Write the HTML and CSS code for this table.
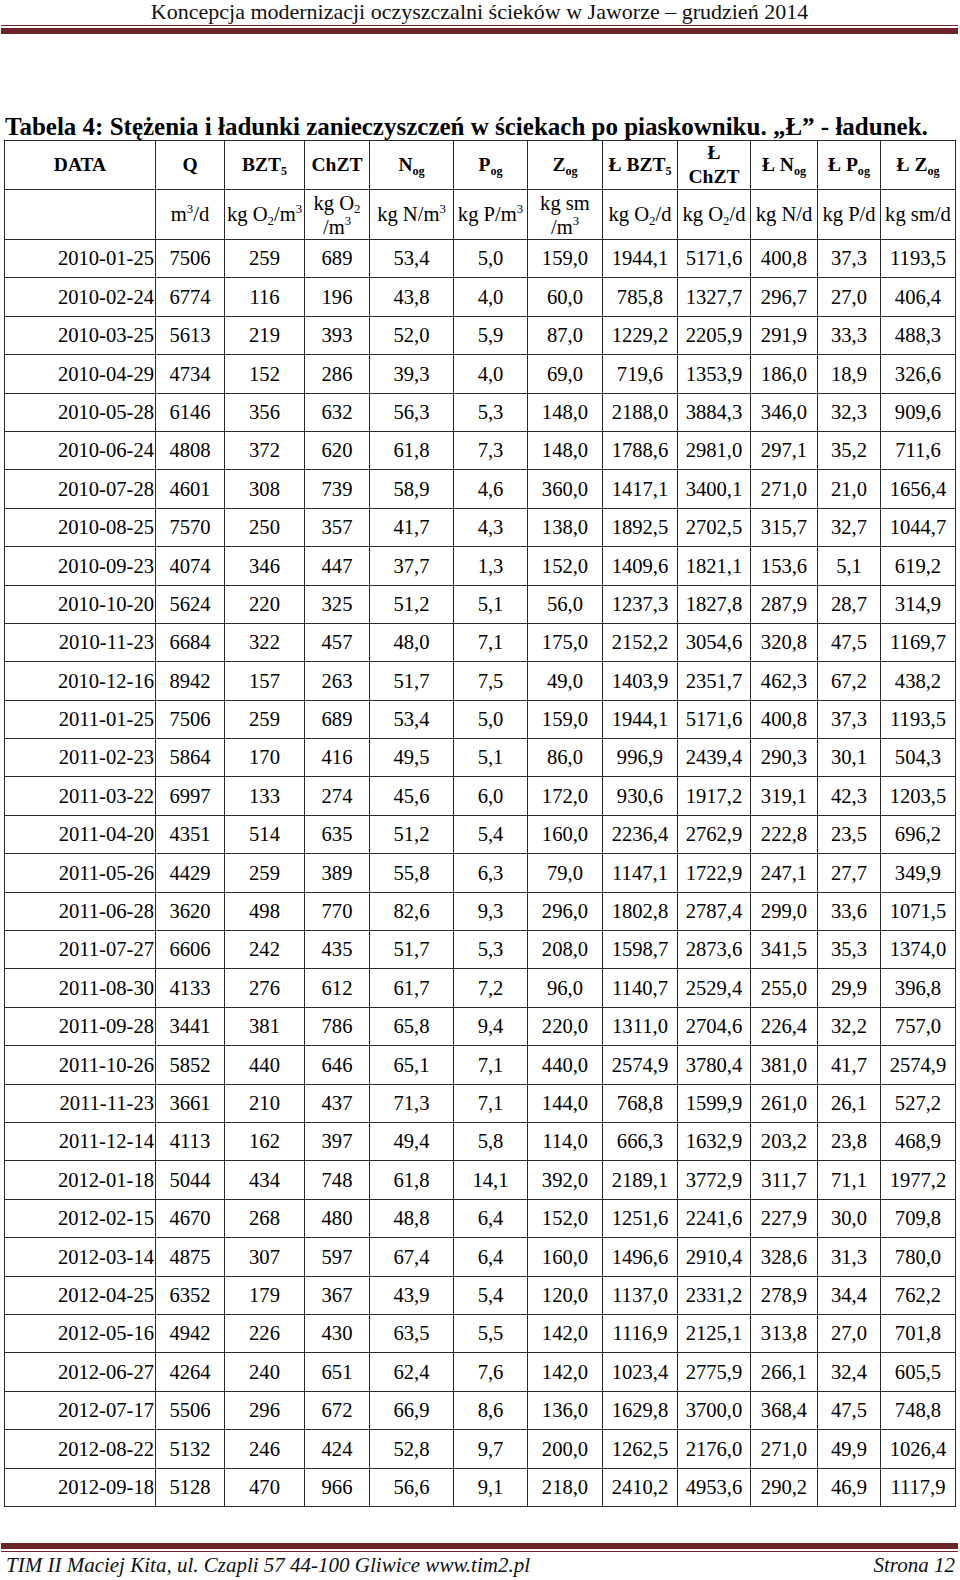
FILE: index.html
```html
<!DOCTYPE html>
<html lang="pl">
<head>
<meta charset="utf-8">
<title>Tabela 4</title>
<link rel="stylesheet" href="styles.css">
</head>
<body>
<div class="page">
  <header class="doc-header">
    <div class="doc-title">Koncepcja modernizacji oczyszczalni ścieków w Jaworze – grudzień 2014</div>
    <div class="rule-thin"></div>
    <div class="rule-thick"></div>
  </header>

  <h1 class="caption">Tabela 4: Stężenia i ładunki zanieczyszczeń w ściekach po piaskowniku. „Ł” - ładunek.</h1>

  <table class="data">
    <colgroup>
      <col class="c-date"><col class="c-q"><col class="c-bzt"><col class="c-chzt"><col class="c-n"><col class="c-p"><col class="c-z"><col class="c-lbzt"><col class="c-lchzt"><col class="c-ln"><col class="c-lp"><col class="c-lz">
    </colgroup>
    <thead>
      <tr class="h1">
        <th>DATA</th>
        <th>Q</th>
        <th>BZT<sub>5</sub></th>
        <th>ChZT</th>
        <th>N<sub>og</sub></th>
        <th>P<sub>og</sub></th>
        <th>Z<sub>og</sub></th>
        <th>Ł BZT<sub>5</sub></th>
        <th><span class="l2">Ł<br>ChZT</span></th>
        <th>Ł N<sub>og</sub></th>
        <th>Ł P<sub>og</sub></th>
        <th>Ł Z<sub>og</sub></th>
      </tr>
      <tr class="h2">
        <td></td>
        <td>m<sup>3</sup>/d</td>
        <td>kg O<sub>2</sub>/m<sup>3</sup></td>
        <td><span class="l2">kg O<sub>2</sub><br>/m<sup>3</sup></span></td>
        <td>kg N/m<sup>3</sup></td>
        <td>kg P/m<sup>3</sup></td>
        <td><span class="l2">kg sm<br>/m<sup>3</sup></span></td>
        <td>kg O<sub>2</sub>/d</td>
        <td>kg O<sub>2</sub>/d</td>
        <td>kg N/d</td>
        <td>kg P/d</td>
        <td>kg sm/d</td>
      </tr>
    </thead>
    <tbody>
<tr><td>2010-01-25</td><td>7506</td><td>259</td><td>689</td><td>53,4</td><td>5,0</td><td>159,0</td><td>1944,1</td><td>5171,6</td><td>400,8</td><td>37,3</td><td>1193,5</td></tr>
<tr><td>2010-02-24</td><td>6774</td><td>116</td><td>196</td><td>43,8</td><td>4,0</td><td>60,0</td><td>785,8</td><td>1327,7</td><td>296,7</td><td>27,0</td><td>406,4</td></tr>
<tr><td>2010-03-25</td><td>5613</td><td>219</td><td>393</td><td>52,0</td><td>5,9</td><td>87,0</td><td>1229,2</td><td>2205,9</td><td>291,9</td><td>33,3</td><td>488,3</td></tr>
<tr><td>2010-04-29</td><td>4734</td><td>152</td><td>286</td><td>39,3</td><td>4,0</td><td>69,0</td><td>719,6</td><td>1353,9</td><td>186,0</td><td>18,9</td><td>326,6</td></tr>
<tr><td>2010-05-28</td><td>6146</td><td>356</td><td>632</td><td>56,3</td><td>5,3</td><td>148,0</td><td>2188,0</td><td>3884,3</td><td>346,0</td><td>32,3</td><td>909,6</td></tr>
<tr><td>2010-06-24</td><td>4808</td><td>372</td><td>620</td><td>61,8</td><td>7,3</td><td>148,0</td><td>1788,6</td><td>2981,0</td><td>297,1</td><td>35,2</td><td>711,6</td></tr>
<tr><td>2010-07-28</td><td>4601</td><td>308</td><td>739</td><td>58,9</td><td>4,6</td><td>360,0</td><td>1417,1</td><td>3400,1</td><td>271,0</td><td>21,0</td><td>1656,4</td></tr>
<tr><td>2010-08-25</td><td>7570</td><td>250</td><td>357</td><td>41,7</td><td>4,3</td><td>138,0</td><td>1892,5</td><td>2702,5</td><td>315,7</td><td>32,7</td><td>1044,7</td></tr>
<tr><td>2010-09-23</td><td>4074</td><td>346</td><td>447</td><td>37,7</td><td>1,3</td><td>152,0</td><td>1409,6</td><td>1821,1</td><td>153,6</td><td>5,1</td><td>619,2</td></tr>
<tr><td>2010-10-20</td><td>5624</td><td>220</td><td>325</td><td>51,2</td><td>5,1</td><td>56,0</td><td>1237,3</td><td>1827,8</td><td>287,9</td><td>28,7</td><td>314,9</td></tr>
<tr><td>2010-11-23</td><td>6684</td><td>322</td><td>457</td><td>48,0</td><td>7,1</td><td>175,0</td><td>2152,2</td><td>3054,6</td><td>320,8</td><td>47,5</td><td>1169,7</td></tr>
<tr><td>2010-12-16</td><td>8942</td><td>157</td><td>263</td><td>51,7</td><td>7,5</td><td>49,0</td><td>1403,9</td><td>2351,7</td><td>462,3</td><td>67,2</td><td>438,2</td></tr>
<tr><td>2011-01-25</td><td>7506</td><td>259</td><td>689</td><td>53,4</td><td>5,0</td><td>159,0</td><td>1944,1</td><td>5171,6</td><td>400,8</td><td>37,3</td><td>1193,5</td></tr>
<tr><td>2011-02-23</td><td>5864</td><td>170</td><td>416</td><td>49,5</td><td>5,1</td><td>86,0</td><td>996,9</td><td>2439,4</td><td>290,3</td><td>30,1</td><td>504,3</td></tr>
<tr><td>2011-03-22</td><td>6997</td><td>133</td><td>274</td><td>45,6</td><td>6,0</td><td>172,0</td><td>930,6</td><td>1917,2</td><td>319,1</td><td>42,3</td><td>1203,5</td></tr>
<tr><td>2011-04-20</td><td>4351</td><td>514</td><td>635</td><td>51,2</td><td>5,4</td><td>160,0</td><td>2236,4</td><td>2762,9</td><td>222,8</td><td>23,5</td><td>696,2</td></tr>
<tr><td>2011-05-26</td><td>4429</td><td>259</td><td>389</td><td>55,8</td><td>6,3</td><td>79,0</td><td>1147,1</td><td>1722,9</td><td>247,1</td><td>27,7</td><td>349,9</td></tr>
<tr><td>2011-06-28</td><td>3620</td><td>498</td><td>770</td><td>82,6</td><td>9,3</td><td>296,0</td><td>1802,8</td><td>2787,4</td><td>299,0</td><td>33,6</td><td>1071,5</td></tr>
<tr><td>2011-07-27</td><td>6606</td><td>242</td><td>435</td><td>51,7</td><td>5,3</td><td>208,0</td><td>1598,7</td><td>2873,6</td><td>341,5</td><td>35,3</td><td>1374,0</td></tr>
<tr><td>2011-08-30</td><td>4133</td><td>276</td><td>612</td><td>61,7</td><td>7,2</td><td>96,0</td><td>1140,7</td><td>2529,4</td><td>255,0</td><td>29,9</td><td>396,8</td></tr>
<tr><td>2011-09-28</td><td>3441</td><td>381</td><td>786</td><td>65,8</td><td>9,4</td><td>220,0</td><td>1311,0</td><td>2704,6</td><td>226,4</td><td>32,2</td><td>757,0</td></tr>
<tr><td>2011-10-26</td><td>5852</td><td>440</td><td>646</td><td>65,1</td><td>7,1</td><td>440,0</td><td>2574,9</td><td>3780,4</td><td>381,0</td><td>41,7</td><td>2574,9</td></tr>
<tr><td>2011-11-23</td><td>3661</td><td>210</td><td>437</td><td>71,3</td><td>7,1</td><td>144,0</td><td>768,8</td><td>1599,9</td><td>261,0</td><td>26,1</td><td>527,2</td></tr>
<tr><td>2011-12-14</td><td>4113</td><td>162</td><td>397</td><td>49,4</td><td>5,8</td><td>114,0</td><td>666,3</td><td>1632,9</td><td>203,2</td><td>23,8</td><td>468,9</td></tr>
<tr><td>2012-01-18</td><td>5044</td><td>434</td><td>748</td><td>61,8</td><td>14,1</td><td>392,0</td><td>2189,1</td><td>3772,9</td><td>311,7</td><td>71,1</td><td>1977,2</td></tr>
<tr><td>2012-02-15</td><td>4670</td><td>268</td><td>480</td><td>48,8</td><td>6,4</td><td>152,0</td><td>1251,6</td><td>2241,6</td><td>227,9</td><td>30,0</td><td>709,8</td></tr>
<tr><td>2012-03-14</td><td>4875</td><td>307</td><td>597</td><td>67,4</td><td>6,4</td><td>160,0</td><td>1496,6</td><td>2910,4</td><td>328,6</td><td>31,3</td><td>780,0</td></tr>
<tr><td>2012-04-25</td><td>6352</td><td>179</td><td>367</td><td>43,9</td><td>5,4</td><td>120,0</td><td>1137,0</td><td>2331,2</td><td>278,9</td><td>34,4</td><td>762,2</td></tr>
<tr><td>2012-05-16</td><td>4942</td><td>226</td><td>430</td><td>63,5</td><td>5,5</td><td>142,0</td><td>1116,9</td><td>2125,1</td><td>313,8</td><td>27,0</td><td>701,8</td></tr>
<tr><td>2012-06-27</td><td>4264</td><td>240</td><td>651</td><td>62,4</td><td>7,6</td><td>142,0</td><td>1023,4</td><td>2775,9</td><td>266,1</td><td>32,4</td><td>605,5</td></tr>
<tr><td>2012-07-17</td><td>5506</td><td>296</td><td>672</td><td>66,9</td><td>8,6</td><td>136,0</td><td>1629,8</td><td>3700,0</td><td>368,4</td><td>47,5</td><td>748,8</td></tr>
<tr><td>2012-08-22</td><td>5132</td><td>246</td><td>424</td><td>52,8</td><td>9,7</td><td>200,0</td><td>1262,5</td><td>2176,0</td><td>271,0</td><td>49,9</td><td>1026,4</td></tr>
<tr><td>2012-09-18</td><td>5128</td><td>470</td><td>966</td><td>56,6</td><td>9,1</td><td>218,0</td><td>2410,2</td><td>4953,6</td><td>290,2</td><td>46,9</td><td>1117,9</td></tr>
    </tbody>
  </table>

  <footer class="doc-footer">
    <div class="rule-thick"></div>
    <div class="rule-thin"></div>
    <div class="foot-text">
      <span>TIM II Maciej Kita, ul. Czapli 57 44-100 Gliwice www.tim2.pl</span>
      <span>Strona 12</span>
    </div>
  </footer>
</div>
</body>
</html>
```

FILE: styles.css
```css
html, body {
  margin: 0;
  padding: 0;
  background: #ffffff;
}

.page {
  width: 960px;
  height: 1580px;
  overflow: hidden;
  display: flex;
  flex-direction: column;
  color: #000;
  font-family: "Liberation Serif", "Times New Roman", serif;
}

.doc-header {
  padding: 0 2px 0 1px;
}

.doc-title {
  font-family: "Liberation Serif", serif;
  font-size: 22px;
  line-height: 24px;
  text-align: center;
  color: #111;
  height: 25px;
}

.rule-thin {
  height: 1px;
  background: #6b2528;
}

.rule-thick {
  height: 6px;
  background: #6b2528;
}

.doc-header .rule-thin { margin-bottom: 2px; }

.caption {
  margin: 79px 0 0 5px;
  font-size: 25px;
  line-height: 28px;
  font-weight: bold;
  white-space: nowrap;
}

table.data {
  margin: -1px 0 0 4px;
  width: 951px;
  table-layout: fixed;
  border-collapse: collapse;
  font-size: 20.6px;
}

.c-date { width: 151px; }
.c-q { width: 69px; }
.c-bzt { width: 80px; }
.c-chzt { width: 65px; }
.c-n { width: 84px; }
.c-p { width: 74px; }
.c-z { width: 75px; }
.c-lbzt { width: 75px; }
.c-lchzt { width: 73px; }
.c-ln { width: 67px; }
.c-lp { width: 63px; }
.c-lz { width: 75px; }

table.data th,
table.data td {
  border: 1px solid #2a2a2a;
  padding: 0;
  text-align: center;
  vertical-align: middle;
  white-space: nowrap;
  line-height: 1;
}

tr.h1 { height: 48px; }
tr.h1 th {
  font-size: 19.5px;
  font-weight: bold;
}

tr.h2 { height: 50px; }

table.data .l2 {
  display: inline-block;
  line-height: 24px;
}

tbody tr { height: 38.4px; }

tbody td:first-child {
  text-align: right;
  padding-right: 1px;
}

sub, sup {
  font-size: 62%;
  line-height: 0;
  position: relative;
  vertical-align: baseline;
}
sub { top: 0.3em; }
sup { top: -0.65em; }

.doc-footer {
  margin-top: 36px;
  padding: 0 2px 0 1px;
}

.doc-footer .rule-thin { margin-top: 2px; }

.foot-text {
  display: flex;
  justify-content: space-between;
  font-family: "Liberation Serif", serif;
  font-style: italic;
  font-size: 21px;
  line-height: 24px;
  padding: 1px 3px 0 5px;
  color: #111;
}
```
